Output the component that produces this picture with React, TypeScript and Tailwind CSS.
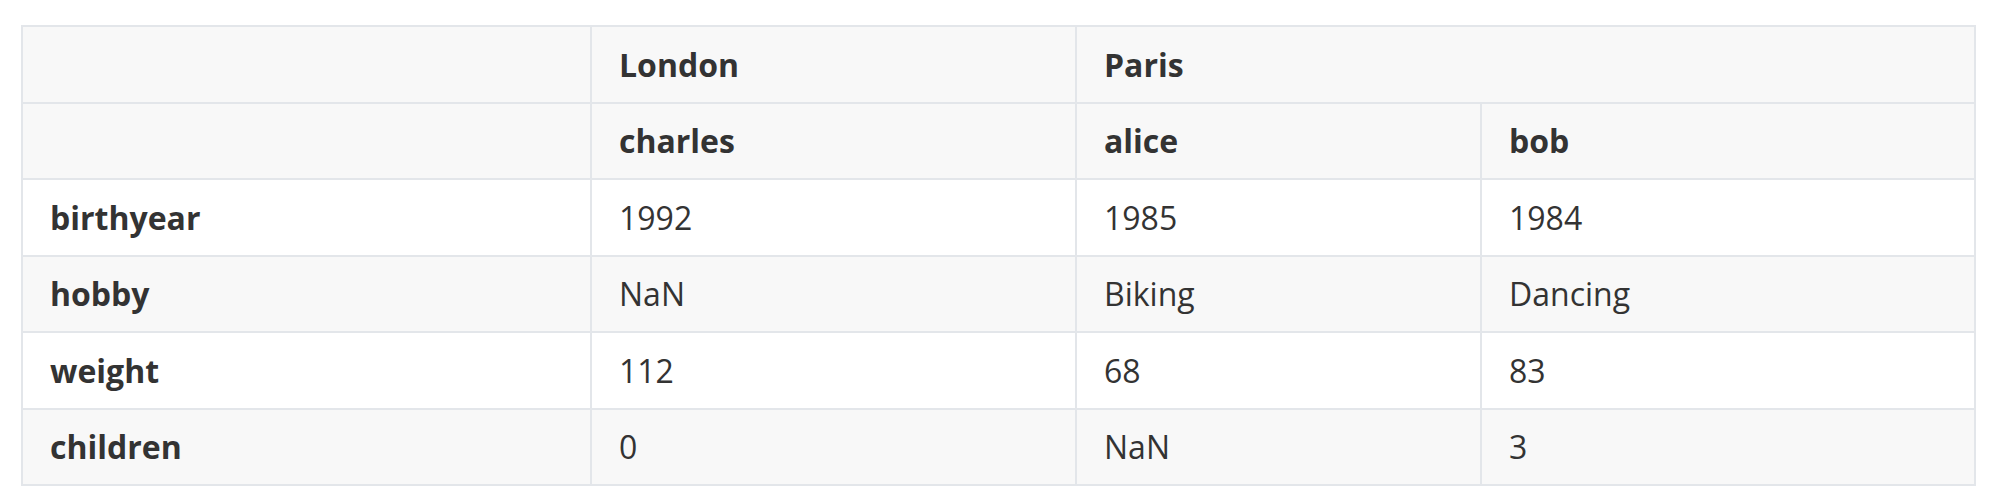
import React from 'react';

const rows = [
  { label: 'birthyear', values: ['1992', '1985', '1984'] },
  { label: 'hobby', values: ['NaN', 'Biking', 'Dancing'] },
  { label: 'weight', values: ['112', '68', '83'] },
  { label: 'children', values: ['0', 'NaN', '3'] },
];

const cell = 'border-2 border-[#e3e6ea] px-[27px] py-0 text-left align-middle leading-[1.35]';

export default function App() {
  return (
    <div
      className="w-[2000px] h-[504px] bg-white pt-[25px] pl-[21px] text-[#333] text-[32px]"
      style={{ fontFamily: '"Open Sans", "Noto Sans", sans-serif' }}
    >
      <table className="border-collapse table-fixed w-[1953px]">
        <colgroup>
          <col className="w-[569px]" />
          <col className="w-[485px]" />
          <col className="w-[405px]" />
          <col className="w-[494px]" />
        </colgroup>
        <thead>
          <tr className="bg-[#f8f8f8] h-[76.5px]">
            <th className={cell}></th>
            <th className={`${cell} font-bold`}>London</th>
            <th className={`${cell} font-bold`} colSpan={2}>
              Paris
            </th>
          </tr>
          <tr className="bg-[#f8f8f8] h-[76.5px]">
            <th className={cell}></th>
            <th className={`${cell} font-bold`}>charles</th>
            <th className={`${cell} font-bold`}>alice</th>
            <th className={`${cell} font-bold`}>bob</th>
          </tr>
        </thead>
        <tbody>
          {rows.map((r, i) => (
            <tr key={r.label} className={`${i % 2 === 0 ? 'bg-white' : 'bg-[#f8f8f8]'} h-[76.5px]`}>
              <th className={`${cell} font-bold`}>{r.label}</th>
              {r.values.map((v, j) => (
                <td key={j} className={cell}>
                  {v}
                </td>
              ))}
            </tr>
          ))}
        </tbody>
      </table>
    </div>
  );
}
